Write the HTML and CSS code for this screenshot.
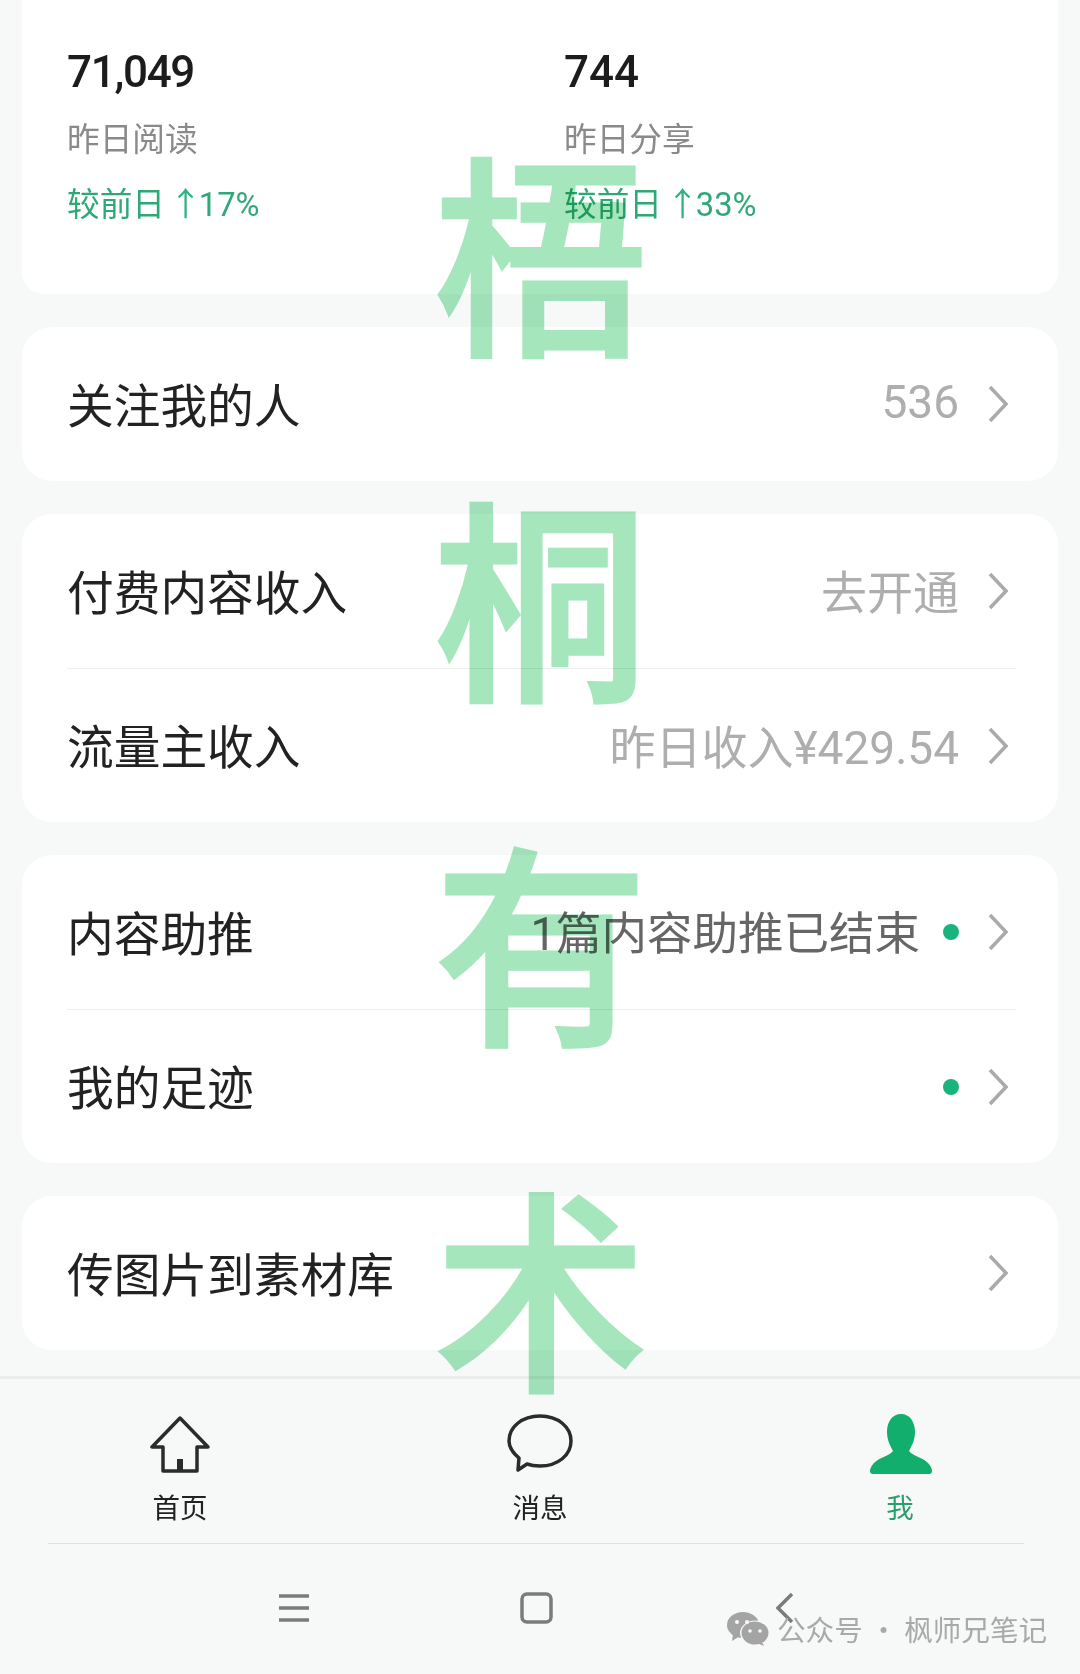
FILE: index.html
```html
<!DOCTYPE html>
<html lang="zh-CN">
  <head>
    <meta charset="UTF-8">
    <meta name="viewport" content="width=device-width, initial-scale=1">
    <title>我</title>
    <link rel="stylesheet" href="styles.css">
  </head>
  <body>
    <main class="cards">
      <section class="card card--stats">
        <div class="stat">
          <div class="stat__num stat__num--tight">71,049</div>
          <div class="stat__label">昨日阅读</div>
          <div class="stat__trend">较前日 <span class="stat__up">↑</span>17%</div>
        </div>
        <div class="stat">
          <div class="stat__num">744</div>
          <div class="stat__label">昨日分享</div>
          <div class="stat__trend">较前日 <span class="stat__up">↑</span>33%</div>
        </div>
      </section>

      <section class="card">
        <div class="row">
          <span class="row__title">关注我的人</span>
          <span class="row__value">536</span>
          <svg class="chevron" viewBox="0 0 20 38"><path d="M2 2 L18 19 L2 36" /></svg>
        </div>
      </section>

      <section class="card">
        <div class="row">
          <span class="row__title">付费内容收入</span>
          <span class="row__value">去开通</span>
          <svg class="chevron" viewBox="0 0 20 38"><path d="M2 2 L18 19 L2 36" /></svg>
        </div>
        <div class="row">
          <span class="row__title">流量主收入</span>
          <span class="row__value">昨日收入¥429.54</span>
          <svg class="chevron" viewBox="0 0 20 38"><path d="M2 2 L18 19 L2 36" /></svg>
        </div>
      </section>

      <section class="card">
        <div class="row">
          <span class="row__title">内容助推</span>
          <span class="row__value row__value--dark">1篇内容助推已结束</span>
          <span class="dot"></span>
          <svg class="chevron" viewBox="0 0 20 38"><path d="M2 2 L18 19 L2 36" /></svg>
        </div>
        <div class="row">
          <span class="row__title">我的足迹</span>
          <span class="dot"></span>
          <svg class="chevron" viewBox="0 0 20 38"><path d="M2 2 L18 19 L2 36" /></svg>
        </div>
      </section>

      <section class="card">
        <div class="row">
          <span class="row__title">传图片到素材库</span>
          <svg class="chevron" viewBox="0 0 20 38"><path d="M2 2 L18 19 L2 36" /></svg>
        </div>
      </section>
    </main>

    <nav class="tabs">
      <div class="tab">
        <svg class="tab__icon" viewBox="1 0 60 60">
          <path class="line" d="M31 4 L3 33 L14 33 L14 57 L48 57 L48 33 L59 33 Z" />
          <rect class="solid" x="28" y="45" width="6" height="12" />
        </svg>
        <span>首页</span>
      </div>
      <div class="tab">
        <svg class="tab__icon" viewBox="0 0 66 60">
          <path class="line" d="M12 44 C5 38 2 32 2 27 C2 13 15 2 33 2 C51 2 64 13 64 27 C64 41 51 52 33 52 C28 52 24 51.500 20 50 L11 56 Z" />
        </svg>
        <span>消息</span>
      </div>
      <div class="tab tab--active">
        <svg class="tab__icon" viewBox="0 0 62 60">
          <path d="M31 0 C40 0 45 8 45 18 C45 27 41 33 39 37 C43 42 52 43 58 49 C61 52 62 55 62 57 C62 59 61 60 59 60 L3 60 C1 60 0 59 0 57 C0 55 1 52 4 49 C10 43 19 42 23 37 C21 33 17 27 17 18 C17 8 22 0 31 0 Z" />
        </svg>
        <span>我</span>
      </div>
    </nav>

    <div class="sysbar">
      <svg class="sysbar__menu" viewBox="0 0 30 28"><path d="M0 2 H30 M0 14 H30 M0 26 H30" /></svg>
      <svg class="sysbar__home" viewBox="0 0 33 32"><rect x="2" y="2" width="29" height="28" rx="5" /></svg>
      <svg class="sysbar__back" viewBox="0 0 18 32"><path d="M16 2 L2 16 L16 30" /></svg>
    </div>

    <!-- stamped over the screenshot -->
    <div class="stamp">
      <span>梧</span>
      <span>桐</span>
      <span>有</span>
      <span>术</span>
    </div>

    <div class="credit">
      <svg class="credit__logo" viewBox="0 0 42 34">
        <ellipse cx="16" cy="13" rx="16" ry="13" />
        <path d="M6 22 L5 29 L13 24 Z" />
        <ellipse class="credit__cut" cx="28" cy="21" rx="15" ry="12.500" />
        <ellipse cx="28" cy="21" rx="13.500" ry="11.500" />
        <path d="M35 30 L37 34 L30 31 Z" />
        <circle class="credit__eye" cx="10" cy="10" r="2" />
        <circle class="credit__eye" cx="20" cy="10" r="2" />
        <circle class="credit__eye" cx="23" cy="19" r="1.800" />
        <circle class="credit__eye" cx="33" cy="19" r="1.800" />
      </svg>
      <span>公众号 · 枫师兄笔记</span>
    </div>
  </body>
</html>
```

FILE: styles.css
```css
html,
body {
  margin: 0;
  width: 1080px;
  height: 1674px;
  overflow: hidden;
}

body {
  position: relative;
  background-color: #f7f9f9;
  font-family: Roboto, "Noto Sans CJK SC", sans-serif;
  color: #222;
}

.cards {
  display: flex;
  flex-direction: column;
  gap: 33px;
  padding: 0 22px 26px;
}

.card {
  background-color: #fff;
  border-radius: 30px;
}

.card--stats {
  display: grid;
  grid-template-columns: 497px 1fr;
  height: 294px;
  padding-left: 45px;
  border-radius: 0 0 22px 22px;
  box-sizing: border-box;
}

.stat {
  padding-top: 42px;
}

.stat__num {
  font-size: 44px;
  font-weight: 500;
  line-height: 60px;
  color: #1c1c1c;
}

.stat__num--tight {
  letter-spacing: -1.300px;
}

.stat__label {
  margin-top: 14px;
  font-size: 32.700px;
  line-height: 48px;
  color: #8a8a8a;
}

.stat__trend {
  margin-top: 17px;
  font-size: 32.700px;
  line-height: 48px;
  color: #2fa878;
  word-spacing: -4px;
}

.stat__up {
  margin-right: -3px;
  color: #2eb380;
}

.row {
  display: flex;
  align-items: center;
  height: 154px;
  margin: 0 42px 0 45px;
  padding-right: 8px;
  box-sizing: border-box;
}

.row + .row {
  border-top: 1px solid #eee;
}

.row__title {
  margin-right: auto;
  margin-bottom: 4px;
  font-size: 46.700px;
}

.row__value {
  margin-bottom: 4px;
  font-size: 46px;
  color: #aeaeae;
}

.row__value--dark {
  color: #666;
  font-size: 45.500px;
}

.dot {
  width: 16px;
  height: 16px;
  margin-left: 23px;
  border-radius: 50%;
  background-color: #19b47c;
}

.chevron {
  width: 20px;
  height: 38px;
  margin-left: 29px;
  fill: none;
  stroke: #aaa;
  stroke-width: 3.500;
}

.tabs {
  position: relative;
  display: grid;
  grid-template-columns: 360px 360px 360px;
  height: 168px;
  padding-top: 35px;
  box-sizing: border-box;
  border-top: 3px solid #ebeded;
}

.tabs::after {
  content: "";
  position: absolute;
  left: 48px;
  right: 56px;
  bottom: 0;
  height: 1px;
  background-color: #dfe1e1;
}

.tab {
  display: flex;
  flex-direction: column;
  align-items: center;
  font-size: 27.500px;
  line-height: 38px;
}

.tab__icon {
  height: 60px;
  margin-bottom: 16px;
}

.line {
  fill: none;
  stroke: #2b2b2b;
  stroke-width: 3.500;
  stroke-linejoin: round;
}

.solid {
  fill: #2b2b2b;
}

.tab--active {
  color: #2a9d6c;
}

.tab--active .tab__icon {
  fill: #12ae6e;
  transform: translateX(1px);
}

.sysbar {
  display: flex;
  align-items: center;
  padding: 48px 0 0 279px;
  fill: none;
  stroke: #7b7b7b;
  stroke-width: 3.500;
}

.sysbar__menu {
  width: 30px;
  height: 28px;
}

.sysbar__home {
  width: 33px;
  height: 32px;
  margin-left: 211px;
}

.sysbar__back {
  width: 18px;
  height: 32px;
  margin-left: 223px;
}

.stamp {
  position: absolute;
  top: 74px;
  left: 434px;
  display: flex;
  flex-direction: column;
  font-size: 214px;
  font-weight: 500;
  line-height: 345px;
  color: #a5e6bd;
  -webkit-text-stroke: 3px #a5e6bd;
  font-family: "Noto Sans CJK SC", sans-serif;
  mix-blend-mode: multiply;
  pointer-events: none;
}

.credit {
  position: absolute;
  top: 1607px;
  left: 727px;
  display: flex;
  align-items: center;
  gap: 8px;
  font-size: 28.600px;
  line-height: 44px;
  color: #a9a9a9;
  font-family: "Noto Sans CJK SC", sans-serif;
  white-space: nowrap;
}

.credit__logo {
  width: 42px;
  height: 34px;
  fill: #a4a4a4;
}

.credit__cut {
  fill: #f7f9f9;
}

.credit__eye {
  fill: #f7f9f9;
}
```
